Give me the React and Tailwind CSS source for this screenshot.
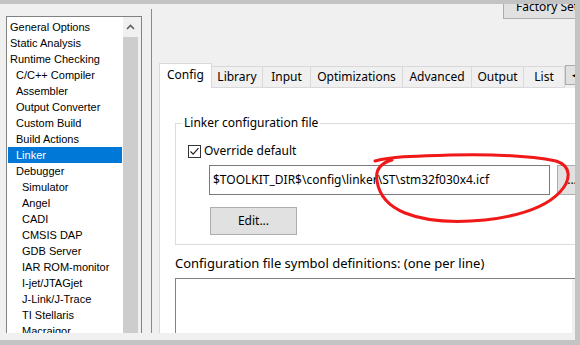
import React from "react";

const items = [
  ["General Options", 0],
  ["Static Analysis", 0],
  ["Runtime Checking", 0],
  ["C/C++ Compiler", 1],
  ["Assembler", 1],
  ["Output Converter", 1],
  ["Custom Build", 1],
  ["Build Actions", 1],
  ["Linker", 1],
  ["Debugger", 1],
  ["Simulator", 2],
  ["Angel", 2],
  ["CADI", 2],
  ["CMSIS DAP", 2],
  ["GDB Server", 2],
  ["IAR ROM-monitor", 2],
  ["I-jet/JTAGjet", 2],
  ["J-Link/J-Trace", 2],
  ["TI Stellaris", 2],
  ["Macraigor", 2],
];

const tabs = [
  ["Config", "w-[53px]"],
  ["Library", "w-[51px]"],
  ["Input", "w-[48px]"],
  ["Optimizations", "w-[92px]"],
  ["Advanced", "w-[69px]"],
  ["Output", "w-[52px]"],
  ["List", "w-[41px]"],
];

const indent = ["pl-[2px]", "pl-[8px]", "pl-[14px]"];

const CategoryList = () => (
  <div
    className="flex w-[136px] h-[340px] border border-[#828282] bg-white shrink-0 text-[11px]"
    style={{ fontFamily: '"Liberation Sans", Arial, sans-serif' }}
  >
    <div className="flex-1 pt-[2px]">
      {items.map(([label, level]) => (
        <div
          key={label}
          className={`mx-[1px] h-[16px] leading-[16px] whitespace-nowrap ${indent[level]} ${
            label === "Linker" ? "bg-[#0078d7] text-white" : "text-black"
          }`}
        >
          {label}
        </div>
      ))}
    </div>
    <div className="w-[18px] bg-[#f0f0f0] flex flex-col">
      <div className="w-[15px] h-[19px] flex items-center justify-center">
        <svg width="9" height="6" viewBox="0 0 9 6">
          <path d="M1 5 L4.5 1.5 L8 5" fill="none" stroke="#606060" strokeWidth="1.6" />
        </svg>
      </div>
      <div className="w-[15px] flex-1 bg-[#cdcdcd] mt-[1px]" />
    </div>
  </div>
);

const Checkbox = () => (
  <div className="w-[13px] h-[13px] border border-[#333] bg-white flex items-center justify-center">
    <svg width="11" height="11" viewBox="0 0 11 11">
      <path d="M1.5 5.5 L4.2 8.2 L9.5 2.2" fill="none" stroke="#222" strokeWidth="1.2" />
    </svg>
  </div>
);

const LinkerConfig = () => (
  <div className="flex flex-col pl-[15px] pt-[27px]">
    <fieldset className="w-[430px] border border-[#dcdcdc] pb-[9px]">
      <legend className="ml-[6px] px-[2px] leading-[16px]">Linker configuration file</legend>
      <div className="flex items-center h-[16px] mt-[12px] ml-[12px]">
        <Checkbox />
        <span className="ml-[3px]">Override default</span>
      </div>
      <div className="flex mt-[6px] ml-[33px]">
        <div className="w-[341px] h-[30px] border border-[#7a7a7a] bg-white flex items-center pl-[3px] whitespace-nowrap">
          $TOOLKIT_DIR$\config\linker\ST\stm32f030x4.icf
        </div>
        <div className="ml-[7px] w-[30px] h-[30px] border border-[#adadad] bg-[#e1e1e1] flex items-center justify-center">
          ...
        </div>
      </div>
      <button className="mt-[12px] ml-[34px] w-[87px] h-[28px] border border-[#adadad] bg-[#e1e1e1] flex items-center justify-center">
        Edit...
      </button>
    </fieldset>
    <div className="mt-[9px] text-[13px] leading-[18px] whitespace-nowrap">
      Configuration file symbol definitions: (one per line)
    </div>
    <div className="mt-[6px] flex w-[430px] h-[80px] border border-[#828282] bg-white">
      <div className="w-[396px]" />
      <div className="w-[17px] bg-[#f0f0f0]" />
    </div>
  </div>
);

export default function App() {
  return (
    <div
      className="relative w-[580px] h-[345px] bg-[#c3c3c3] pt-[4px] pr-[5px] pb-[5px] flex flex-col text-[12px] text-black"
      style={{ fontFamily: '"Noto Sans", "Open Sans", sans-serif' }}
    >
      <div className="flex-1 min-h-0 bg-[#f0f0f0] pb-[7px] flex flex-col overflow-hidden">
        <div className="flex flex-1 min-h-0 overflow-hidden">
          <div className="pl-[6px] pt-[12px] shrink-0">
            <CategoryList />
          </div>
          <div className="ml-[9px] mt-[5px] w-px bg-[#8a8a8a] shrink-0" />
          <div className="ml-[7px] flex flex-col shrink-0 w-[440px]">
            <div className="flex h-[15px]">
              <div className="ml-[344px] mt-[-10px] w-[90px] h-[25px] border border-[#adadad] bg-[#e1e1e1] pl-[12px] flex items-center whitespace-nowrap">
                Factory Settings
              </div>
            </div>
            <div className="flex items-end mt-[44px] h-[25px]">
              {tabs.map(([label, w]) =>
                label === "Config" ? (
                  <div
                    key={label}
                    className={`${w} h-[25px] bg-white border-l border-t border-r border-[#d9d9d9] pl-[7px] pt-[3px] leading-[16px]`}
                  >
                    {label}
                  </div>
                ) : (
                  <div
                    key={label}
                    className={`${w} h-[22px] bg-[#f0f0f0] border-t border-r border-b border-[#d9d9d9] flex items-center justify-center leading-[16px]`}
                  >
                    {label}
                  </div>
                )
              )}
              <div className="self-start mt-[2px] w-[20px] h-[20px] border border-[#adadad] bg-[#e1e1e1] flex items-center pl-[6px] text-[9px]">
                ◀
              </div>
            </div>
            <div className="flex-1 bg-white border-l border-[#d9d9d9]">
              <LinkerConfig />
            </div>
          </div>
        </div>
      </div>
      <svg className="absolute left-0 top-0 pointer-events-none" width="580" height="345">
        <path
          d="M375 161 C 395 156, 420 156, 450 155 C 490 154, 530 156, 556 161 C 572 166, 571 180, 560 192 C 546 207, 520 216, 485 220 C 455 223, 425 221, 405 213 C 388 206, 379 194, 377 181 C 375 170, 381 163, 392 160"
          fill="none"
          stroke="#f01818"
          strokeWidth="3"
          strokeLinecap="round"
        />
      </svg>
    </div>
  );
}
